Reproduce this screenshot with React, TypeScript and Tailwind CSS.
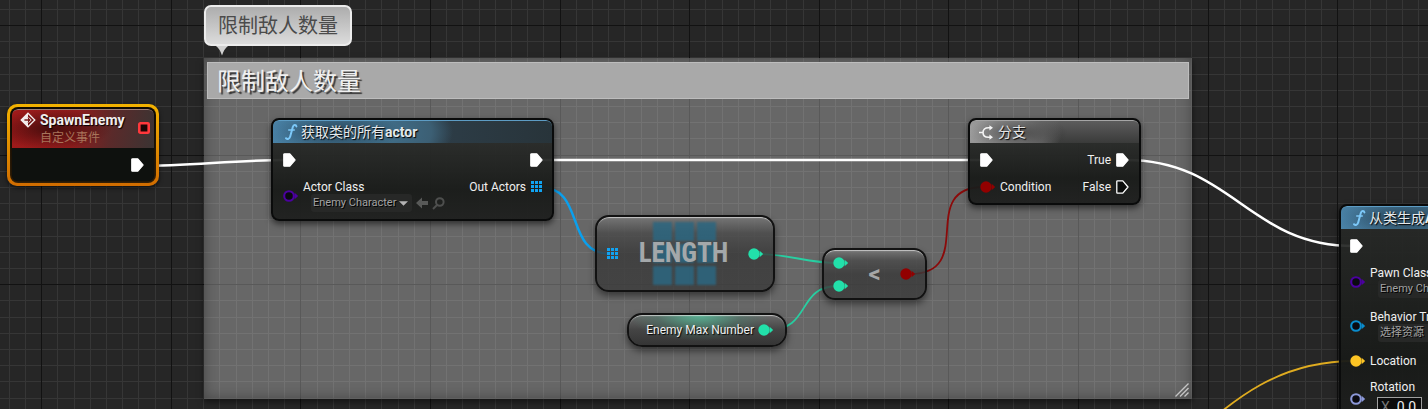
import React, { useId } from "react";

const CELL = 16.2;
const ORIGIN_X = 41.2;
const ORIGIN_Y = 25;
const LINE_COUNT = 160;

function gridLines(origin: number) {
  return Array.from({ length: LINE_COUNT }, (_, i) => {
    const k = i - 8;
    return { at: Math.round(origin + k * CELL), major: k % 8 === 0 };
  }).filter((line) => line.at >= 0);
}

function Grid() {
  const cols = gridLines(ORIGIN_X);
  const rows = gridLines(ORIGIN_Y);
  return (
    <svg className="absolute inset-0 h-full w-full" aria-hidden="true">
      {[false, true].map((major) => (
        <g key={String(major)} fill={major ? "#121212" : "#363636"}>
          {cols
            .filter((l) => l.major === major)
            .map((l) => (
              <rect key={`c${l.at}`} x={l.at} y="0" width="1" height="100%" />
            ))}
          {rows
            .filter((l) => l.major === major)
            .map((l) => (
              <rect key={`r${l.at}`} x="0" y={l.at} width="100%" height="1" />
            ))}
        </g>
      ))}
    </svg>
  );
}

function Wires() {
  return (
    <svg className="absolute inset-0 h-full w-full" fill="none" aria-hidden="true">
      <g stroke="#fff" strokeWidth="2.6">
        <path d="M140 166C190 166 235 160 285 160" />
        <path d="M538 160H984" />
        <path d="M1126 160C1232 160 1248 246 1354 246" />
      </g>
      <path d="M540 187C586 187 564 254 610 254" stroke="#0aa0ee" strokeWidth="2.4" />
      <g stroke="#28cfa2" strokeWidth="1.8">
        <path d="M758 254C790 254 806 263 838 263" />
        <path d="M768 330C812 330 796 286 838 286" />
      </g>
      <path d="M910 274C978 274 916 187 984 187" stroke="#8b0a0a" strokeWidth="1.8" />
      <path d="M1168 460C1236 392 1284 361 1354 361" stroke="#e0ac20" strokeWidth="1.8" />
    </svg>
  );
}

function ExecPin({ filled = true }: { filled?: boolean }) {
  return (
    <svg className="h-[14px] w-[13px] shrink-0" viewBox="0 0 13 14" aria-hidden="true">
      <path
        d="M1.6 .8H6.8L12 7L6.8 13.2H1.6Q.8 13.2 .8 12.4V1.6Q.8 .8 1.6 .8Z"
        fill={filled ? "#fff" : "#0c0d0c"}
        stroke="#fff"
        strokeWidth="1.3"
        strokeLinejoin="round"
      />
    </svg>
  );
}

function DataPin({ color, filled = false }: { color: string; filled?: boolean }) {
  return (
    <svg className="h-[12px] w-[16px] shrink-0" viewBox="0 0 16 12" aria-hidden="true">
      <path d="M11.6 2.8L15.2 6L11.6 9.2Z" fill={color} />
      {filled ? (
        <circle cx="6" cy="6" r="5.7" fill={color} />
      ) : (
        <circle cx="6" cy="6" r="4.8" fill="#0a0a10" stroke={color} strokeWidth="2.1" />
      )}
    </svg>
  );
}

function ArrayPin() {
  return (
    <svg className="h-[12px] w-[12px] shrink-0" viewBox="0 0 12 12" fill="#10a3f2" aria-hidden="true">
      {[0, 4, 8].map((y) =>
        [0, 4, 8].map((x) => <rect key={`${x}-${y}`} x={x} y={y} width="3" height="3" />)
      )}
    </svg>
  );
}

function FunctionIcon() {
  return (
    <svg className="h-[18px] w-[14px] shrink-0" viewBox="0 0 14 18" fill="none" aria-hidden="true">
      <path
        d="M12.4 3.4C12 1.6 9.6 1.4 8.8 4L6.2 13.6C5.6 16 3.4 16.6 2 15.2"
        stroke="#7cc8f8"
        strokeWidth="2"
        strokeLinecap="round"
      />
      <path d="M4.2 7H10.8" stroke="#7cc8f8" strokeWidth="1.5" />
    </svg>
  );
}

function Select({ label, id }: { label: string; id: string }) {
  return (
    <span className="relative flex h-[18px] w-[101px] items-center rounded-[3px] bg-[#272827]">
      <select
        id={id}
        className="h-full w-full appearance-none bg-transparent pr-[10px] pl-[2px] text-[11px] leading-[18px] text-[#a2a2a2] outline-none [text-shadow:1px_1px_0_#000]"
      >
        <option>{label}</option>
      </select>
      <svg className="pointer-events-none absolute right-[4px] h-[5px] w-[9px]" viewBox="0 0 9 5" aria-hidden="true">
        <path d="M0 .3H9L4.5 4.8Z" fill="#b4b4b4" />
      </svg>
    </span>
  );
}

function SelectPin({ name, value, color, children }: { name: string; value: string; color: string; children?: React.ReactNode }) {
  const id = useId();
  return (
    <div className="flex items-center gap-[4px]">
      <DataPin color={color} />
      <div className="flex flex-col">
        <label htmlFor={id} className="h-[14px] leading-[14px]">
          {name}
        </label>
        <div className="flex items-center gap-[4px] pl-[8px]">
          <Select id={id} label={value} />
          {children}
        </div>
      </div>
    </div>
  );
}

const SOLID_NODE =
  "absolute overflow-hidden rounded-[8px] border-2 border-[#0a0b0b] bg-[linear-gradient(180deg,rgba(38,40,38,.93)_24px,rgba(24,26,24,.95)_70%,rgba(30,31,30,.95))] shadow-[0_3px_6px_rgba(0,0,0,.55)] ";
const GLASS_NODE =
  "absolute border-2 border-[#121212] bg-[linear-gradient(180deg,rgba(120,120,120,.85)_0,rgba(74,74,74,.82)_22%,rgba(56,56,56,.8)_50%,rgba(58,58,58,.8)_100%)] bg-clip-padding shadow-[0_4px_7px_rgba(0,0,0,.45),inset_0_2px_1px_-1px_rgba(225,225,225,.75)] ";
const BLUE_HEADER =
  "flex h-[23px] items-center gap-[3px] rounded-t-[6px] border-t border-[#5d9cc4] bg-[radial-gradient(ellipse_70px_20px_at_58px_50%,rgba(20,30,38,.6),transparent),radial-gradient(ellipse_180px_60px_at_0%_50%,#4f8db6_0%,#41708c_60%,#3c5f74_88%,transparent_100%),linear-gradient(90deg,#34495a,#28343a)] pl-[11px] text-[14px] leading-none text-[#e4e9ec] [text-shadow:1px_1px_1px_#000]";

function CustomEventNode() {
  return (
    <article className="absolute top-[104px] left-[7px] w-[152px] rounded-[10px] bg-[linear-gradient(180deg,#f2b200,#d06c00)] p-[3px] shadow-[0_2px_4px_rgba(0,0,0,.6)]">
      <div className="rounded-[8px] bg-[linear-gradient(180deg,#100b04,#352108)] p-[2px]">
        <div className="overflow-hidden rounded-[6px] bg-[#0e110e] shadow-[0_0_2px_#000]">
          <header className="flex h-[39px] items-start gap-[4px] rounded-t-[6px] border-t border-[#a08078] bg-[radial-gradient(ellipse_60px_20px_at_28%_50%,rgba(45,8,8,.75),transparent),linear-gradient(100deg,#a01a1a_0%,#8c1c1c_45%,#5a2a2a_70%,#3a3433_100%)] pt-[2px] pr-[4px] pl-[8px]">
            <svg className="h-[16px] w-[16px] shrink-0" viewBox="0 0 16 16" fill="none" aria-hidden="true">
              <path d="M8 1L1 8L8 15Z" fill="#f3eeee" />
              <path d="M8 1.2L14.8 8L8 14.8L1.2 8Z" stroke="#f3eeee" strokeWidth="1.3" />
              <path d="M4.4 8H10.4M8 5.2L11 8L8 10.8" stroke="#7b2020" strokeWidth="1.5" />
              <path d="M8.6 5.4L11.2 8L8.6 10.6" stroke="#e8dada" strokeWidth="1" />
            </svg>
            <div className="flex-1">
              <h3 className="text-[14px] leading-[17px] font-bold text-[#f1eeee] [text-shadow:1px_1px_1px_#000]">SpawnEnemy</h3>
              <p className="text-[12px] leading-[18px] text-[#a8745a]">自定义事件</p>
            </div>
            <svg className="mt-[10px] h-[12px] w-[12px] shrink-0" viewBox="0 0 12 12" aria-hidden="true">
              <rect x="1.3" y="1.3" width="9.4" height="9.4" rx="1" fill="#1c0505" stroke="#ff383c" strokeWidth="2.6" />
            </svg>
          </header>
          <div className="flex h-[33px] items-center justify-end pr-[10px]">
            <ExecPin />
          </div>
        </div>
      </div>
    </article>
  );
}

function GetAllActorsNode() {
  return (
    <article className={SOLID_NODE + "top-[118px] left-[271px] w-[283px]"}>
      <header className={BLUE_HEADER}>
        <FunctionIcon />
        <h3>
          获取类的所有<b>actor</b>
        </h3>
      </header>
      <div className="flex flex-col gap-[12px] pt-[9px] pr-[9px] pb-[7px] pl-[10px]">
        <div className="flex h-[16px] items-center justify-between">
          <ExecPin />
          <ExecPin />
        </div>
        <div className="flex items-start justify-between">
          <SelectPin name="Actor Class" value="Enemy Character" color="#4b00a0">
            <svg className="h-[12px] w-[12px]" viewBox="0 0 12 12" fill="#585958" aria-hidden="true">
              <path d="M0 6L6 .5V4H12V8H6V11.5Z" />
            </svg>
            <svg className="h-[13px] w-[13px]" viewBox="0 0 13 13" fill="none" stroke="#4e4f4e" strokeWidth="2" aria-hidden="true">
              <circle cx="7.8" cy="5" r="3.8" />
              <path d="M5 8L1 12" />
            </svg>
          </SelectPin>
          <div className="flex h-[14px] items-center gap-[5px]">
            <span>Out Actors</span>
            <ArrayPin />
          </div>
        </div>
      </div>
    </article>
  );
}

function LengthNode() {
  return (
    <article className={GLASS_NODE + "top-[215px] left-[595px] flex h-[77px] w-[180px] items-center justify-between rounded-[14px] pr-[9px] pl-[10px]"}>
      <svg className="absolute top-[4px] left-[54px] h-[66px] w-[70px] blur-[1px]" viewBox="0 0 70 66" fill="#2b6680" fillOpacity=".85" aria-hidden="true">
        {[1, 23, 45].map((y) =>
          [2, 24, 46].map((x) => <rect key={`${x}-${y}`} x={x} y={y} width="19" height="19" />)
        )}
      </svg>
      <ArrayPin />
      <h3 className="relative font-['Roboto_Condensed','Liberation_Sans_Narrow',Roboto,sans-serif] text-[27px] leading-none font-bold text-[#a4a8aa]">
        LENGTH
      </h3>
      <DataPin color="#22e0aa" filled />
    </article>
  );
}

function VariableNode() {
  return (
    <article className="absolute top-[313px] left-[627px] flex h-[34px] w-[160px] items-center justify-end gap-[4px] rounded-[15px] border-2 border-[#121212] bg-[radial-gradient(ellipse_70px_26px_at_45%_0%,rgba(84,190,154,.85),rgba(70,130,110,.4)_60%,transparent),linear-gradient(180deg,#6a6a6a,#444_50%,#353535)] bg-clip-padding pr-[11px] shadow-[0_4px_7px_rgba(0,0,0,.5),inset_0_2px_1px_-1px_rgba(225,225,225,.75)]">
      <span className="[text-shadow:1px_1px_1px_#000]">Enemy Max Number</span>
      <DataPin color="#22e0aa" filled />
    </article>
  );
}

function LessNode() {
  return (
    <article className={GLASS_NODE + "top-[248px] left-[822px] flex h-[52px] w-[105px] items-center justify-between rounded-[13px] pr-[9px] pl-[9px]"}>
      <div className="flex flex-col gap-[11px]">
        <DataPin color="#22e0aa" filled />
        <DataPin color="#22e0aa" filled />
      </div>
      <h3 className="text-[24px] leading-none font-bold text-[#a6a6a6]">&lt;</h3>
      <DataPin color="#920000" filled />
    </article>
  );
}

function BranchNode() {
  return (
    <article className={SOLID_NODE + "top-[118px] left-[968px] w-[173px]"}>
      <header className="flex h-[23px] items-center gap-[5px] rounded-t-[6px] border-t border-[#a5a5a5] bg-[radial-gradient(ellipse_50px_18px_at_48px_55%,rgba(30,30,30,.55),transparent),radial-gradient(ellipse_92px_50px_at_0%_50%,#a0a0a0_0%,#858585_60%,#6c6c6c_80%,transparent_100%),linear-gradient(180deg,#5c5c5c,#3a3b3a)] pl-[9px] text-[14px] leading-none text-[#e4e4e4] [text-shadow:1px_1px_1px_#000]">
        <svg className="h-[15px] w-[14px] shrink-0" viewBox="0 0 14 15" fill="none" stroke="#f4f4f4" strokeWidth="1.6" aria-hidden="true">
          <path d="M0 7.5H4M12 2.8H9.5C6 2.8 4 4.6 4 7.5S6 12.2 9.5 12.2H12" />
          <path d="M10.4 .2L14 2.8L10.4 5.4ZM10.4 9.6L14 12.2L10.4 14.8Z" fill="#f4f4f4" stroke="none" />
        </svg>
        <h3>分支</h3>
      </header>
      <div className="flex flex-col gap-[12px] pt-[9px] pr-[10px] pb-[9px] pl-[10px]">
        <div className="flex h-[16px] items-center justify-between">
          <ExecPin />
          <div className="flex items-center gap-[5px]">
            <span>True</span>
            <ExecPin />
          </div>
        </div>
        <div className="flex h-[14px] items-center justify-between">
          <div className="flex items-center gap-[4px]">
            <DataPin color="#920000" filled />
            <span>Condition</span>
          </div>
          <div className="flex items-center gap-[5px]">
            <span>False</span>
            <ExecPin filled={false} />
          </div>
        </div>
      </div>
    </article>
  );
}

function SpawnFromClassNode() {
  const id = useId();
  return (
    <article className={SOLID_NODE + "top-[204px] left-[1339px] w-[260px]"}>
      <header className={BLUE_HEADER}>
        <FunctionIcon />
        <h3>
          从类生成<b>AI</b>
        </h3>
      </header>
      <div className="flex flex-col gap-[12px] pt-[9px] pb-[9px] pl-[9px]">
        <div className="flex h-[16px] items-center">
          <ExecPin />
        </div>
        <SelectPin name="Pawn Class" value="Enemy Character" color="#4b00a0" />
        <SelectPin name="Behavior Tree" value="选择资源" color="#0a8ccc" />
        <div className="flex h-[14px] items-center gap-[4px]">
          <DataPin color="#fcc424" filled />
          <span>Location</span>
        </div>
        <div className="flex items-center gap-[4px]">
          <DataPin color="#8c98d8" />
          <div className="flex flex-col gap-[3px]">
            <label htmlFor={id} className="h-[14px] leading-[14px]">
              Rotation
            </label>
            <div className="ml-[7px] flex h-[20px] w-[45px] items-center gap-[7px] border border-[#a0a0a0] bg-[#0c0c0c] pl-[3px] text-[14px]">
              <span className="text-[#777]">X</span>
              <input id={id} defaultValue="0.0" className="w-[24px] bg-transparent text-[#eee] outline-none" />
            </div>
          </div>
        </div>
      </div>
    </article>
  );
}

function CommentBox() {
  return (
    <section className="absolute top-[58px] left-[204px] flex h-[341px] w-[988px] flex-col bg-white/30 px-[3px] pt-[4px] shadow-[0_3px_6px_rgba(0,0,0,.5),inset_0_0_14px_rgba(0,0,0,.35)]">
      <h2 className="h-[37px] border border-[#bdbdbd] bg-[#a9a9a9] pl-[9px] text-[24px] leading-[39px] text-[#f0f0f0] [text-shadow:2px_2px_1px_#333]">
        限制敌人数量
      </h2>
      <svg className="mt-auto mb-[2px] h-[14px] w-[14px] self-end" viewBox="0 0 14 14" stroke="#c4c4c4" strokeWidth="1.4" aria-hidden="true">
        <path d="M.5 13.5L13.5 .5M5 13.5L13.5 5M9.5 13.5L13.5 9.5" />
      </svg>
    </section>
  );
}

function CommentBubble() {
  return (
    <div className="absolute top-[5px] left-[204px]">
      <p className="h-[41px] w-[148px] rounded-[7px] border-2 border-[#ececec] bg-[linear-gradient(180deg,#adadad,#dcdcdc)] pl-[12px] text-[20px] leading-[38px] text-[#4b4b4b]">
        限制敌人数量
      </p>
      <svg className="ml-[12px] h-[10px] w-[12px]" viewBox="0 0 12 10" aria-hidden="true">
        <path d="M0 0H12Q8 3 6 9.5Q4 3 0 0Z" fill="#d0d0d0" />
      </svg>
    </div>
  );
}

export default function App() {
  return (
    <main className="relative min-h-screen w-full overflow-hidden bg-[#262626] font-[Roboto,'Noto_Sans_CJK_SC',sans-serif] text-[12px] leading-[14px] text-[#f0f0f0]">
      <Grid />
      <CommentBox />
      <CommentBubble />
      <Wires />
      <CustomEventNode />
      <GetAllActorsNode />
      <LengthNode />
      <VariableNode />
      <LessNode />
      <BranchNode />
      <SpawnFromClassNode />
    </main>
  );
}
